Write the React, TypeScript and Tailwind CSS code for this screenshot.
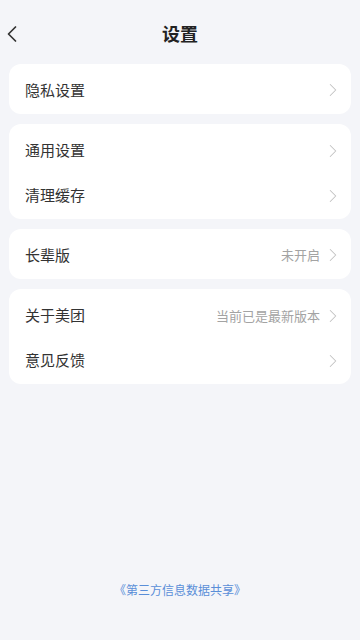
import { ChevronLeft, ChevronRight } from "lucide-react";

type Row = { label: string; value?: string };

const groups: Row[][] = [
  [{ label: "隐私设置" }],
  [{ label: "通用设置" }, { label: "清理缓存" }],
  [{ label: "长辈版", value: "未开启" }],
  [{ label: "关于美团", value: "当前已是最新版本" }, { label: "意见反馈" }],
];

function Group({ rows }: { rows: Row[] }) {
  const multi = rows.length > 1;
  return (
    <div className={`bg-white rounded-xl ${multi ? "pt-[3px] pb-[2px]" : ""}`}>
      {rows.map((r) => (
        <div
          key={r.label}
          className={`flex items-center pl-4 pr-[7px] pt-[2px] ${multi ? "h-[45px]" : "h-[50px]"}`}
        >
          <span className="flex-1 text-[15px] text-[#333333]">{r.label}</span>
          {r.value && (
            <span className="text-[13px] text-[#a3a3a3] mr-[2px]">{r.value}</span>
          )}
          <ChevronRight size={22} strokeWidth={1.1} className="text-[#c2c2c2]" />
        </div>
      ))}
    </div>
  );
}

export default function App() {
  return (
    <main
      className="min-h-screen h-[640px] bg-[#f4f5f9] flex flex-col"
      style={{ fontFamily: '"Noto Sans CJK SC", "Noto Sans", sans-serif' }}
    >
      <header className="relative h-[64px] flex items-center justify-center">
        <button className="absolute left-[-2px] top-[20px] text-[#333333]">
          <ChevronLeft size={28} strokeWidth={1.5} />
        </button>
        <h1 className="text-[18px] font-bold text-[#222222] pt-[2px]">设置</h1>
      </header>

      <div className="px-[9px] flex flex-col gap-[10px]">
        {groups.map((g, i) => (
          <Group key={i} rows={g} />
        ))}
      </div>

      <div className="flex-1" />
      <footer className="pb-[40px] text-center">
        <a className="text-[12px] text-[#5a8ed8]">《第三方信息数据共享》</a>
      </footer>
    </main>
  );
}
